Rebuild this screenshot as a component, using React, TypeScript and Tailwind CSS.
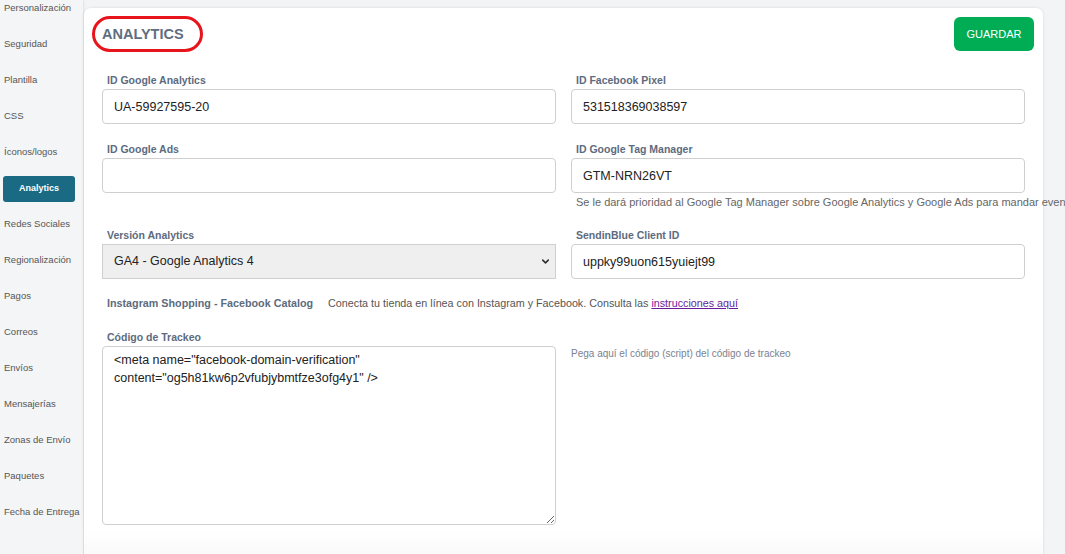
import { ChevronDown } from "lucide-react";

const menu = [
  "Personalización",
  "Seguridad",
  "Plantilla",
  "CSS",
  "Íconos/logos",
  "Analytics",
  "Redes Sociales",
  "Regionalización",
  "Pagos",
  "Correos",
  "Envíos",
  "Mensajerías",
  "Zonas de Envío",
  "Paquetes",
  "Fecha de Entrega",
];

const font = { fontFamily: '"Liberation Sans", Arial, sans-serif' };

const Label = ({ children }: { children: string }) => (
  <label className="mb-[2px] block pl-[5px] text-[10.5px] font-bold leading-[14px] text-[#5d6b7e]">
    {children}
  </label>
);

const Field = ({ label, value }: { label: string; value: string }) => (
  <div>
    <Label>{label}</Label>
    <input
      readOnly
      value={value}
      className="block h-[35px] w-full rounded-[4px] border border-[#cfcfcf] bg-white px-[11px] text-[12.5px] text-[#222] outline-none"
    />
  </div>
);

export default function App() {
  return (
    <div
      className="flex h-[554px] w-full overflow-hidden bg-[#f3f4f6]"
      style={font}
    >
      <aside className="w-[83px] shrink-0 bg-[#f4f5f7] shadow-[1px_0_2px_rgba(0,0,0,0.08)]">
        <ul className="-mt-[10px] flex flex-col">
          {menu.map((item) =>
            item === "Analytics" ? (
              <li key={item} className="flex h-[36px] items-center pl-[3px]">
                <span className="mt-[2px] flex h-[26px] w-[72px] items-center justify-center rounded-[3px] bg-[#1a6a84] text-[9px] font-bold text-white">
                  {item}
                </span>
              </li>
            ) : (
              <li
                key={item}
                className="flex h-[36px] items-center whitespace-nowrap pl-[4px] text-[9.5px] text-[#555]"
              >
                {item}
              </li>
            )
          )}
        </ul>
      </aside>

      <main className="min-w-0 flex-1 pl-[1px] pr-[22px] pt-[8px]">
        <div className="h-[560px] rounded-[7px] bg-gradient-to-b from-white from-[93%] to-[#f7f7f7] px-[18px] pt-[8px] shadow-[0_0_3px_rgba(0,0,0,0.12)]">
          <div className="-ml-[10px] -mr-[9px] flex items-start justify-between">
            <h1 className="rounded-full border-[3px] border-[#e8141b] pl-[7px] pr-[16px] text-[14.5px] font-bold leading-[30px] text-[#5f6e80]">
              ANALYTICS
            </h1>
            <button className="mt-[1px] h-[34px] w-[80px] rounded-[6px] bg-[#00ad55] text-[11px] text-white">
              GUARDAR
            </button>
          </div>

          <div className="mt-[21px] grid grid-cols-2 gap-x-[15px] gap-y-[18px]">
            <Field label="ID Google Analytics" value="UA-59927595-20" />
            <Field label="ID Facebook Pixel" value="531518369038597" />
            <Field label="ID Google Ads" value="" />
            <div>
              <Field label="ID Google Tag Manager" value="GTM-NRN26VT" />
              <p className="mt-[2px] whitespace-nowrap pl-[5px] text-[11px] leading-[15px] text-[#666]">
                Se le dará prioridad al Google Tag Manager sobre Google
                Analytics y Google Ads para mandar eventos
              </p>
            </div>
            <div>
              <Label>Versión Analytics</Label>
              <div className="relative">
                <select className="block h-[35px] w-full appearance-none rounded-none border border-[#cfcfcf] bg-[#efefef] px-[11px] text-[12.5px] text-[#222] outline-none">
                  <option>GA4 - Google Analytics 4</option>
                </select>
                <ChevronDown
                  className="pointer-events-none absolute right-[5px] top-[12px] h-[11px] w-[11px] text-[#333]"
                  strokeWidth={3.5}
                />
              </div>
            </div>
            <Field label="SendinBlue Client ID" value="uppky99uon615yuiejt99" />
          </div>

          <div className="mt-[17px] flex items-center pl-[5px] text-[10.75px] leading-[14px]">
            <span className="font-bold text-[#5d6b7e]">
              Instagram Shopping - Facebook Catalog
            </span>
            <span className="ml-[15px] text-[#555]">
              Conecta tu tienda en línea con Instagram y Facebook. Consulta las{" "}
              <a href="#" className="text-[#6a1b9a] underline">
                instrucciones aquí
              </a>
            </span>
          </div>

          <div className="mt-[20px] grid grid-cols-2 gap-x-[15px]">
            <div>
              <Label>Código de Trackeo</Label>
              <textarea
                readOnly
                value={
                  '<meta name="facebook-domain-verification"\ncontent="og5h81kw6p2vfubjybmtfze3ofg4y1" />'
                }
                className="block h-[179px] w-full resize-y rounded-[4px] border border-[#cfcfcf] bg-white px-[11px] pt-[4px] text-[12.5px] leading-[18px] text-[#222] outline-none"
              />
            </div>
            <p className="pt-[17px] text-[10px] leading-[14px] text-[#7a8290]">
              Pega aquí el código (script) del código de trackeo
            </p>
          </div>
        </div>
      </main>
    </div>
  );
}
